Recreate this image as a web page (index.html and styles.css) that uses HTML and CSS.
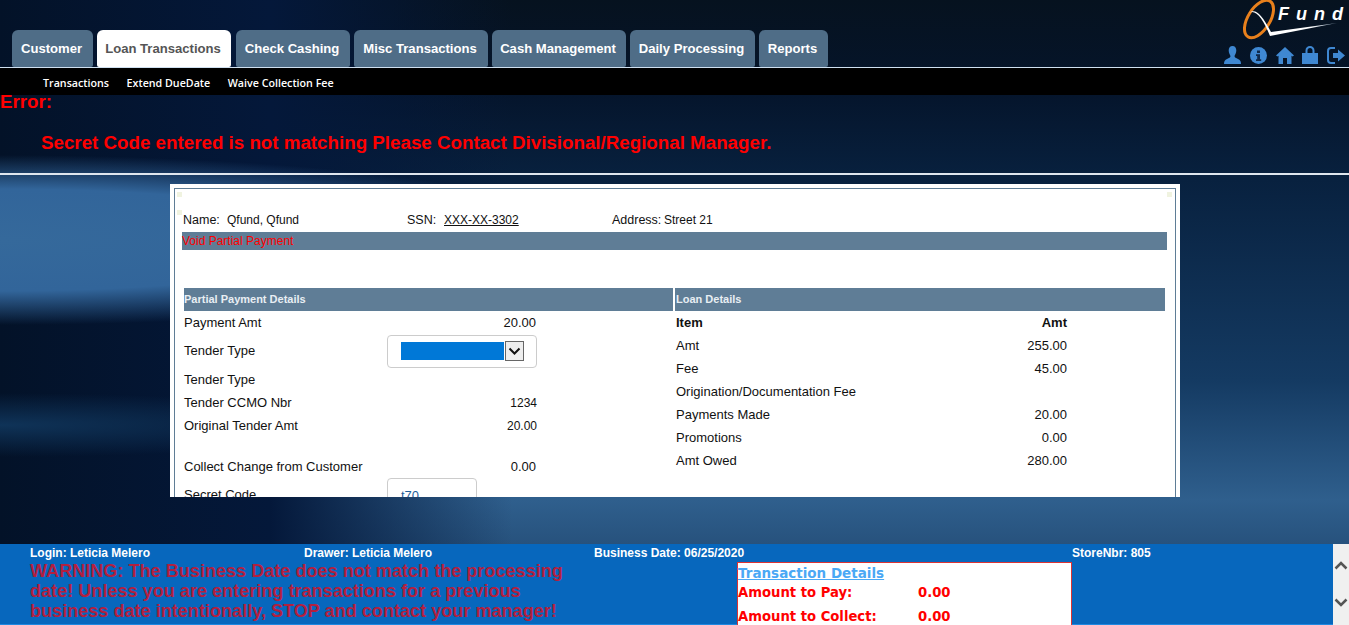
FILE: index.html
```html
<!DOCTYPE html>
<html>
<head>
	<title>QFund</title>
	<meta charset="utf-8">
	<link rel="stylesheet" href="styles.css">
</head>
<body>
	<div class="header">
		<div class="tabs">
			<a class="tab tab-customer">Customer</a>
			<a class="tab tab-loan active">Loan Transactions</a>
			<a class="tab tab-check">Check Cashing</a>
			<a class="tab tab-misc">Misc Transactions</a>
			<a class="tab tab-cash">Cash Management</a>
			<a class="tab tab-daily">Daily Processing</a>
			<a class="tab tab-reports">Reports</a>
		</div>
		<div class="brand">
			<div class="logo">
				<svg class="logo-mark" width="106" height="40" viewBox="0 0 106 40">
					<defs>
						<linearGradient id="tick" x1="0" y1="0" x2="1" y2="0">
							<stop offset="0.7" stop-color="#fff"/>
							<stop offset="1" stop-color="#7f93a8"/>
						</linearGradient>
					</defs>
					<ellipse cx="20" cy="19" rx="11" ry="21" transform="rotate(32 20 19)" fill="none" stroke="#e8801c" stroke-width="3"/>
					<path d="M10 13 C16 8 22 13 32 32 L98 23 L31 36 C24 19 17 9 10 13 Z" fill="url(#tick)"/>
				</svg>
				<span class="logo-text">Fund</span>
			</div>
			<div class="icons">
				<svg width="17" height="18" viewBox="0 0 17 18"><path d="M8.5 0C11 0 12.300 2 12.300 4.500C12.300 7 11 9 10.500 10C10.500 11.500 12 12 14 13C16 14 17 15 17 18H0C0 15 1 14 3 13C5 12 6.500 11.500 6.500 10C6 9 4.700 7 4.700 4.500C4.700 2 6 0 8.500 0Z" fill="#3f88d2"/></svg>
				<svg width="17" height="17" viewBox="0 0 17 17"><circle cx="8.500" cy="8.500" r="8.500" fill="#3f88d2"/><path d="M7 3.500H10V6H7ZM6 7.300H10V12.300H11.200V14H6V12.300H7.200V9H6Z" fill="#10294a"/></svg>
				<svg width="18" height="17" viewBox="0 0 18 17"><path d="M9 0L18 8.500L16.500 9.500L15.500 8.700V17H11V11H7V17H2.500V8.700L1.500 9.500L0 8.500Z" fill="#3f88d2"/></svg>
				<svg width="16" height="18" viewBox="0 0 16 18"><path d="M3.500 7V4.500C3.500 1.500 5.500 0 8 0C10.500 0 12.500 1.500 12.500 4.500V7H16V18H0V7ZM5.500 7H10.500V4.500C10.500 3 9.500 2 8 2C6.500 2 5.500 3 5.500 4.500Z" fill="#3f88d2" fill-rule="evenodd"/></svg>
				<svg width="18" height="17" viewBox="0 0 18 17"><path d="M8 1H4C2 1 1 2.500 1 4V13C1 14.500 2 16 4 16H8" fill="none" stroke="#3f88d2" stroke-width="2"/><path d="M6 6H11V2.500L18 8.500L11 14.500V11H6Z" fill="#3f88d2"/></svg>
			</div>
		</div>
	</div>

	<div class="subnav">
		<a>Transactions</a>
		<a>Extend DueDate</a>
		<a>Waive Collection Fee</a>
	</div>

	<div class="main">
		<div class="errors">
			<div class="error-title">Error:</div>
			<div class="error-msg">Secret Code entered is not matching Please Contact Divisional/Regional Manager.</div>
		</div>
		<div class="card">
			<div class="card-inner">
				<i class="dot dot-a"></i>
				<i class="dot dot-b"></i>
				<i class="dot dot-c"></i>
				<div class="cust">
					<span class="cust-name">Name:</span><span class="cust-val">Qfund, Qfund</span>
					<span class="cust-ssn">SSN:</span><span class="cust-num">XXX-XX-3302</span>
					<span class="cust-addr">Address:</span><span>Street 21</span>
				</div>
				<div class="title-bar">Void Partial Payment</div>

				<div class="details">
					<div class="col col-left">
						<div class="col-head">Partial Payment Details</div>
						<div class="row"><span>Payment Amt</span><span class="num">20.00</span></div>
						<div class="row row-select">
							<span class="select-label">Tender Type</span>
							<div class="field">
								<div class="select-fill"></div>
								<div class="select-btn">
									<svg width="13" height="9" viewBox="0 0 13 9"><path d="M1.500 1.500L6.500 6.500L11.500 1.500" fill="none" stroke="#111" stroke-width="2"/></svg>
								</div>
							</div>
						</div>
						<div class="row"><span>Tender Type</span></div>
						<div class="row"><span>Tender CCMO Nbr</span><span class="num small">1234</span></div>
						<div class="row"><span>Original Tender Amt</span><span class="num small">20.00</span></div>
						<div class="row-gap"></div>
						<div class="row"><span>Collect Change from Customer</span><span class="num">0.00</span></div>
						<div class="row row-code">
							<span>Secret Code</span>
							<div class="code-box">t70</div>
						</div>
					</div>
					<div class="col col-right">
						<div class="col-head">Loan Details</div>
						<div class="row strong"><span>Item</span><span class="num">Amt</span></div>
						<div class="row"><span>Amt</span><span class="num">255.00</span></div>
						<div class="row"><span>Fee</span><span class="num">45.00</span></div>
						<div class="row"><span>Origination/Documentation Fee</span></div>
						<div class="row"><span>Payments Made</span><span class="num">20.00</span></div>
						<div class="row"><span>Promotions</span><span class="num">0.00</span></div>
						<div class="row"><span>Amt Owed</span><span class="num">280.00</span></div>
					</div>
				</div>
			</div>
		</div>
	</div>

	<div class="footer">
		<div class="foot-body">
			<div class="foot-info">
				<span>Login: Leticia Melero</span>
				<span>Drawer: Leticia Melero</span>
				<span>Business Date: 06/25/2020</span>
				<span>StoreNbr: 805</span>
			</div>
			<div class="foot-bottom">
				<div class="warning">WARNING: The Business Date does not match the processing date! Unless you are entering transactions for a previous business date intentionally, STOP and contact your manager!</div>
				<div class="totals">
					<a class="totals-link">Transaction Details</a>
					<div class="totals-row"><span>Amount to Pay:</span><span>0.00</span></div>
					<div class="totals-row"><span>Amount to Collect:</span><span>0.00</span></div>
				</div>
			</div>
		</div>
		<div class="scroller">
			<svg width="14" height="9" viewBox="0 0 14 9"><path d="M1.500 7.500L7 2L12.500 7.500" fill="none" stroke="#555" stroke-width="2.500"/></svg>
			<svg width="14" height="9" viewBox="0 0 14 9"><path d="M1.500 1.500L7 7L12.500 1.500" fill="none" stroke="#555" stroke-width="2.500"/></svg>
		</div>
	</div>
</body>
</html>
```

FILE: styles.css
```css
*{
	padding: 0;
	margin: 0;
	box-sizing: border-box;
}
html, body{
	height: 100%;
	overflow: hidden;
}
body{
	display: flex;
	flex-direction: column;
	font-family: "Liberation Sans", Arial, sans-serif;
	font-size: 13px;
	color: #111;
	background-color: #06162c;
	background-image:
		radial-gradient(ellipse 600px 85px at 0 240px, #35699b 0%, #32659a 60%, rgba(50,101,154,0) 100%),
		radial-gradient(ellipse 380px 32px at 0 425px, #0f3358 0%, rgba(15,51,88,0) 100%),
		linear-gradient(90deg, #031228 0%, #04183a 20%, rgba(5,32,64,0) 38%),
		linear-gradient(180deg, #06121f 0px, #05152c 95px, #08213f 180px, #143a62 380px, #2f5f8d 500px, #27527d 544px);
	background-repeat: no-repeat;
}

/* header */
.header{
	height: 68px;
	flex: none;
	display: flex;
	justify-content: space-between;
	align-items: flex-end;
	border-bottom: 1px solid #cfe0f0;
	padding-left: 12px;
}
.tabs{
	display: flex;
	height: 37px;
}
.tab{
	display: flex;
	align-items: center;
	justify-content: center;
	height: 37px;
	margin-right: 4px;
	padding-right: 2px;
	background: #4f6d87;
	border-radius: 6px 6px 2px 2px;
	color: #fff;
	font-size: 13.100px;
	font-weight: bold;
}
.tab.active{
	background: #fff;
	color: #555;
	margin-right: 5px;
}
.tab-customer{ width: 81px; }
.tab-loan{ width: 134px; }
.tab-check{ width: 114px; }
.tab-misc{ width: 134px; }
.tab-cash{ width: 134px; }
.tab-daily{ width: 125px; }
.tab-reports{ width: 69px; }

.brand{
	width: 121px;
	height: 67px;
	margin-right: 4px;
	display: flex;
	flex-direction: column;
	align-items: flex-end;
}
.logo{
	position: relative;
	width: 106px;
	height: 46px;
}
.logo-mark{
	display: block;
}
.logo-text{
	position: absolute;
	top: 4px;
	left: 39px;
	color: #fff;
	font-size: 18px;
	font-weight: bold;
	font-style: italic;
	letter-spacing: 7px;
}
.icons{
	width: 121px;
	display: flex;
	justify-content: space-between;
	align-items: center;
}

/* sub navigation */
.subnav{
	height: 27px;
	flex: none;
	background: #000;
	padding: 2px 0 0 43px;
	display: flex;
	align-items: center;
	gap: 17.500px;
	color: #fff;
	font-family: "Open Sans", sans-serif;
	font-size: 10.700px;
	font-weight: 600;
}

/* main area */
.main{
	flex: 1;
	min-height: 0;
}
.errors{
	height: 80px;
	border-bottom: 2px solid #dfe6ee;
	color: #f00;
	font-size: 18.750px;
	font-weight: bold;
}
.error-title{
	line-height: 14px;
}
.error-msg{
	padding: 23px 0 0 41px;
	line-height: 21px;
}
.card{
	width: 1010px;
	height: 313px;
	margin: 9px 0 0 170px;
	background: #fff;
	padding: 4px 4px 0 4px;
	overflow: hidden;
}
.card-inner{
	position: relative;
	height: 320px;
	background: #fff;
	border: 1px solid #5f7d96;
	border-bottom: none;
}
.dot{
	position: absolute;
	width: 5px;
	height: 5px;
	background: #f0f3e0;
}
.dot-a{ left: 2px; top: 3px; }
.dot-b{ left: 2px; top: 21px; }
.dot-c{ right: 3px; top: 3px; }

.cust{
	display: flex;
	align-items: center;
	height: 16px;
	margin: 23px 0 0 8px;
	color: #111;
	font-size: 12px;
}
.cust-name{
	width: 44px;
	font-size: 12.500px;
}
.cust-val{ width: 180px; }
.cust-ssn{
	width: 37px;
	font-size: 12.500px;
}
.cust-num{
	width: 168px;
	text-decoration: underline;
}
.cust-addr{
	width: 52px;
	font-size: 12.500px;
}
.title-bar{
	height: 18px;
	margin: 4px 8px 0 7px;
	background: #5f7d96;
	color: #f00;
	font-size: 12px;
	line-height: 18px;
}
.details{
	display: flex;
	gap: 2px;
	margin: 38px 0 0 9px;
}
.col-left{
	width: 489px;
}
.col-right{
	width: 490px;
}
.col-head{
	height: 23px;
	background: #5f7d96;
	color: #e8eef3;
	font-size: 11px;
	font-weight: bold;
	line-height: 23px;
}
.col-right .col-head{
	padding-left: 1px;
}
.row{
	height: 23px;
	display: flex;
	align-items: center;
	justify-content: space-between;
}
.col-left .row{
	padding-right: 137px;
}
.col-right .row{
	padding: 0 98px 0 1px;
}
.row.strong{
	font-weight: bold;
}
.num{
	text-align: right;
}
.small{
	font-size: 12px;
	margin-right: -1px;
}
.col-left .row-select{
	height: 34px;
	padding-right: 136px;
}
.select-label{
	margin-bottom: 2px;
}
.field{
	width: 150px;
	height: 33px;
	border: 1px solid #ccc;
	border-radius: 4px;
	display: flex;
	align-items: center;
	padding-left: 13px;
}
.select-fill{
	width: 103px;
	height: 18px;
	background: #0078d7;
}
.select-btn{
	width: 19px;
	height: 20px;
	margin-left: 1px;
	background: #eee;
	border: 1px solid #666;
	display: flex;
	align-items: center;
	justify-content: center;
}
.row-gap{
	height: 18px;
}
.col-left .row-code{
	height: 40px;
	align-items: flex-start;
	justify-content: flex-start;
	padding: 0;
}
.row-code span{
	width: 203px;
	padding-top: 9px;
}
.code-box{
	width: 90px;
	height: 36px;
	border: 1px solid #ccc;
	border-radius: 4px;
	padding: 9px 0 0 13px;
	color: #1f5f9a;
}

/* footer */
.footer{
	height: 81px;
	flex: none;
	display: flex;
	background: #0767bd;
	border-bottom: 1px solid #1e88e0;
}
.foot-body{
	flex: 1;
	padding-left: 30px;
}
.foot-info{
	height: 17px;
	display: grid;
	grid-template-columns: 274px 290px 478px 200px;
	align-items: center;
	color: #fff;
	font-size: 12px;
	font-weight: bold;
	padding-top: 1px;
}
.foot-bottom{
	display: flex;
}
.warning{
	width: 540px;
	margin-right: 167px;
	color: #b2203f;
	font-size: 18.100px;
	font-weight: bold;
	line-height: 20px;
}
.totals{
	width: 335px;
	height: 63px;
	margin-top: 1px;
	background: #fff;
	border: 1px solid #d33;
	border-bottom: none;
	font-family: "DejaVu Sans", sans-serif;
	font-size: 13.200px;
	font-weight: bold;
	color: #f00;
}
.totals-link{
	display: block;
	height: 20px;
	color: #4aa8f5;
	font-size: 13.500px;
	text-decoration: underline;
	line-height: 20px;
}
.totals-row{
	height: 18px;
	margin-bottom: 6px;
	display: flex;
	align-items: center;
}
.totals-row span:first-child{
	width: 180px;
}
.scroller{
	width: 16px;
	height: 81px;
	flex: none;
	background: #f0f0f0;
	display: flex;
	flex-direction: column;
	align-items: center;
	justify-content: space-between;
	padding: 17px 0 18px;
}
```
